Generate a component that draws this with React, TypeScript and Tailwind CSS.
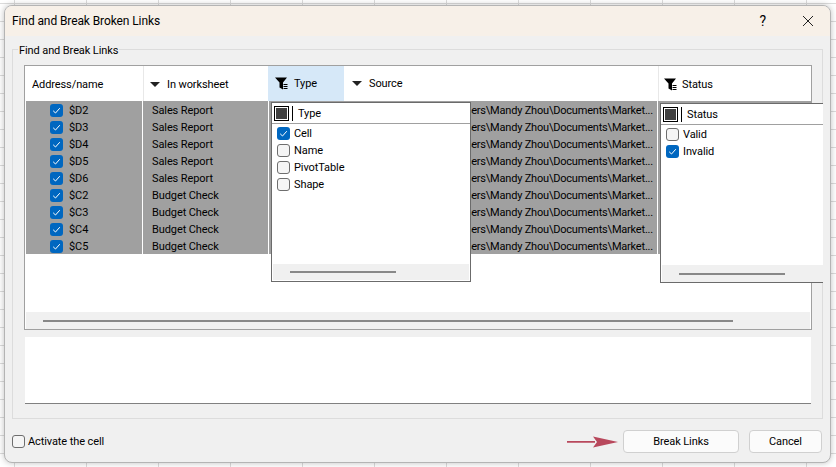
import React from "react";

const rows = [
  ["$D2", "Sales Report"],
  ["$D3", "Sales Report"],
  ["$D4", "Sales Report"],
  ["$D5", "Sales Report"],
  ["$D6", "Sales Report"],
  ["$C2", "Budget Check"],
  ["$C3", "Budget Check"],
  ["$C4", "Budget Check"],
  ["$C5", "Budget Check"],
];

const Checkbox = ({ checked }: { checked?: boolean }) =>
  checked ? (
    <span className="flex h-[13px] w-[13px] shrink-0 items-center justify-center rounded-[3px] bg-[#0067c0]">
      <svg width="9" height="9" viewBox="0 0 9 9" fill="none">
        <path d="M1.2 4.8 3.5 7 7.8 2.2" stroke="white" strokeWidth="1" />
      </svg>
    </span>
  ) : (
    <span className="block h-[13px] w-[13px] shrink-0 rounded-[3px] border border-[#6e6e6e] bg-[#f5f5f5]" />
  );

const Caret = () => <span className="h-0 w-0 border-x-[5px] border-t-[5px] border-x-transparent border-t-[#222]" />;

const FilterIcon = () => (
  <svg width="13" height="13" viewBox="0 0 13 13" className="shrink-0">
    <path d="M0 0.5h12L8 5.5V12.5L4.5 10.5V5.5Z" fill="#000" />
    <path d="M8.5 7.5h4M8.5 9.5h4M8.5 11.5h4" stroke="#000" strokeWidth="1" />
  </svg>
);

const PopupHeader = ({ label }: { label: string }) => (
  <div className="flex h-[21px] items-center border-b border-[#a0a0a0] pl-[2px]">
    <span className="flex h-[15px] w-[15px] items-center justify-center border border-black bg-white">
      <span className="block h-[11px] w-[11px] bg-[#404040]" />
    </span>
    <span className="ml-[3px] block h-[15px] w-px bg-black" />
    <span className="ml-[5px] pt-[1px]">{label}</span>
  </div>
);

const PopupItem = ({ label, checked }: { label: string; checked?: boolean }) => (
  <div className="flex h-[17px] items-center gap-[4px] pl-[5px]">
    <Checkbox checked={checked} />
    <span>{label}</span>
  </div>
);

const ScrollBar = ({ className, thumb }: { className: string; thumb: string }) => (
  <div className={`flex items-center bg-[#f0f0f0] ${className}`}>
    <div className={`h-[2px] bg-[#888888] ${thumb}`} />
  </div>
);

export default function App() {
  return (
    <div className="h-[467px] w-[836px] overflow-hidden bg-white bg-[linear-gradient(to_right,#dcdcdc_1px,transparent_1px),linear-gradient(to_bottom,#dcdcdc_1px,transparent_1px)] bg-[size:72px_18px] bg-[position:14px_3px] pl-[4px] pt-[5px] font-['Roboto',sans-serif] text-[11px] leading-none tracking-[-0.1px] text-black">
      <div className="flex h-[458px] w-[827px] flex-col overflow-hidden rounded-[8px] border border-[#b4b4b4] bg-[#f0f0f0] shadow-[0_0_6px_rgba(0,0,0,0.25)]">
        {/* title */}
        <div className="flex h-[30px] shrink-0 items-center bg-[#f7f0e8] pl-[7px] text-[12px]">
          <span className="flex-1">Find and Break Broken Links</span>
          <span className="mr-[36px] text-[14px]">?</span>
          <svg width="12" height="12" viewBox="0 0 12 12" className="mr-[16px]">
            <path d="M1 1l10 10M11 1 1 11" stroke="#222" strokeWidth="1" />
          </svg>
        </div>

        <div className="flex flex-1 flex-col px-[7px]">
          {/* group */}
          <div className="relative mt-[13px] h-[370px] w-[811px] shrink-0 border border-[#dcdcdc] pl-[11px] pt-[15px]">
            <span className="absolute left-[5px] top-[-5px] bg-[#f0f0f0] px-px">Find and Break Links</span>

            {/* table */}
            <div className="relative flex h-[265px] w-[788px] flex-col border border-[#a0a0a0] bg-white">
              <div className="grid h-[35px] shrink-0 grid-cols-[118px_125px_76px_314px_153px]">
                <div className="flex items-center pl-[7px] pt-[2px]">Address/name</div>
                <div className="flex items-center border-l border-[#e8e8e8] pl-[6px] pt-[2px]">
                  <Caret />
                  <span className="ml-[7px]">In worksheet</span>
                </div>
                <div className="flex items-center bg-[#d6e8f8] pl-[7px]">
                  <FilterIcon />
                  <span className="ml-[6px]">Type</span>
                </div>
                <div className="flex items-center pl-[8px]">
                  <Caret />
                  <span className="ml-[7px]">Source</span>
                </div>
                <div className="flex items-center border-l border-[#e8e8e8] pl-[5px] pt-[2px]">
                  <FilterIcon />
                  <span className="ml-[5px]">Status</span>
                </div>
              </div>

              {rows.map(([address, sheet]) => (
                <div key={address} className="grid h-[17px] shrink-0 grid-cols-[117px_125px_76px_314px_153px] pl-px">
                  <div className="flex items-center gap-[6px] border-r border-white bg-[#a0a0a0] pl-[24px] pt-[2px]">
                    <Checkbox checked />
                    <span>{address}</span>
                  </div>
                  <div className="flex items-center bg-[#a0a0a0] pl-[9px] pt-[2px]">{sheet}</div>
                  <div className="border-l border-white bg-[#a0a0a0]" />
                  <div className="flex items-center justify-end overflow-hidden whitespace-nowrap border-r border-white bg-[#a0a0a0] pr-[4px] pt-[2px] tracking-[-0.2px]">
                    C:\Users\Mandy Zhou\Documents\Market...
                  </div>
                  <div className="bg-[#a0a0a0]" />
                </div>
              ))}

              <div className="flex-1" />
              <ScrollBar className="mx-px h-[17px] pl-[17px]" thumb="w-[690px]" />

              {/* Type filter popup */}
              <div className="absolute left-[246px] top-[36px] flex h-[180px] w-[200px] flex-col border border-[#6b6b6b] bg-white">
                <PopupHeader label="Type" />
                <div className="flex-1 pt-[1px]">
                  <PopupItem label="Cell" checked />
                  <PopupItem label="Name" />
                  <PopupItem label="PivotTable" />
                  <PopupItem label="Shape" />
                </div>
                <ScrollBar className="mx-px mb-px h-[16px] pl-[17px]" thumb="w-[106px]" />
              </div>

              {/* Status filter popup */}
              <div className="absolute left-[635px] top-[37px] z-10 flex h-[180px] w-[163px] flex-col border-y border-l border-[#6b6b6b] bg-white">
                <PopupHeader label="Status" />
                <div className="flex-1 pt-[1px]">
                  <PopupItem label="Valid" />
                  <PopupItem label="Invalid" checked />
                </div>
                <ScrollBar className="ml-px h-[17px] pl-[17px]" thumb="w-[106px]" />
              </div>
            </div>

            {/* message box */}
            <div className="ml-px mt-[7px] h-[67px] w-[786px] border-b border-[#808080] bg-white" />
          </div>

          {/* footer */}
          <div className="flex flex-1 items-center pt-[2px]">
            <Checkbox />
            <span className="ml-[3px] flex-1">Activate the cell</span>
            <svg width="51" height="12" viewBox="0 0 51 12" className="mr-[5px]">
              <path d="M0 5h28V6.8H0ZM26 0.5l25 5.4-25 5.6 4-5.6Z" fill="#b8485c" />
            </svg>
            <button className="flex h-[23px] w-[116px] items-center justify-center rounded-[4px] border border-[#d0d0d0] bg-[#fbfbfb]">Break Links</button>
            <button className="ml-[10px] mr-px flex h-[23px] w-[73px] items-center justify-center rounded-[4px] border border-[#d0d0d0] bg-[#fbfbfb]">Cancel</button>
          </div>
        </div>
      </div>
    </div>
  );
}
